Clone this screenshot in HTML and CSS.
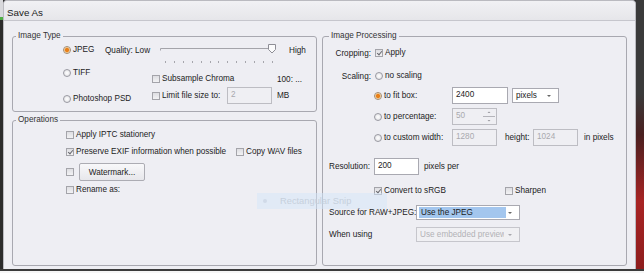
FILE: index.html
```html
<!DOCTYPE html>
<html lang="en">
<head>
    <meta charset="UTF-8">
    <title>Save As</title>
    <link rel="stylesheet" href="styles.css">
</head>
<body>

<div class="screen">
    <div class="edge-left"></div>

    <div class="dialog">
        <div class="titlebar">Save As</div>

        <div class="panes">
            <div class="col">
                <fieldset class="group">
                    <legend>Image Type</legend>
                    <div class="type-body">
                        <div class="formats">
                            <div class="opt"><span class="radio on"></span>JPEG</div>
                            <div class="opt tiff"><span class="radio"></span>TIFF</div>
                            <div class="opt psd"><span class="radio"></span>Photoshop PSD</div>
                        </div>
                        <div class="quality">
                            <div class="q-row">
                                <span class="q-label">Quality: Low</span>
                                <svg class="slider" width="120" height="12" viewBox="0 0 120 12">
                                    <path d="M0.5 6.5 V4.5 H109" fill="none" stroke="#a4a4aa" stroke-width="1"/>
                                    <path d="M108.5 0.5 H115.5 V5.5 L112 9 L108.5 5.5 Z" fill="#fbfbfc" stroke="#8e8e96" stroke-width="1"/>
                                </svg>
                                <span class="high">High</span>
                            </div>
                            <div class="ticks">
                                <i></i><i></i><i></i><i></i><i></i><i></i><i></i><i></i><i></i><i></i><i></i><i></i><i></i>
                            </div>
                            <div class="q-sub">
                                <div class="opt w125"><span class="check"></span>Subsample Chroma</div>
                                <span>100: ...</span>
                            </div>
                            <div class="q-limit">
                                <div class="opt w75"><span class="check"></span>Limit file size to:</div>
                                <div class="field off w45">2</div>
                                <span class="unit">MB</span>
                            </div>
                        </div>
                    </div>
                </fieldset>

                <fieldset class="group grow">
                    <legend>Operations</legend>
                    <div class="ops">
                        <div class="opt"><span class="check"></span>Apply IPTC stationery</div>
                        <div class="ops-row r2">
                            <div class="opt w170"><span class="check on"></span>Preserve EXIF information when possible</div>
                            <div class="opt"><span class="check"></span>Copy WAV files</div>
                        </div>
                        <div class="ops-row r3">
                            <span class="check gap"></span>
                            <button class="btn">Watermark...</button>
                        </div>
                        <div class="opt r4"><span class="check"></span>Rename as:</div>
                    </div>
                </fieldset>
            </div>

            <fieldset class="group processing">
                <legend>Image Processing</legend>
                <div class="ip">
                    <div class="ip-row">
                        <span class="lbl">Cropping:</span>
                        <div class="opt"><span class="check on"></span>Apply</div>
                    </div>
                    <div class="ip-row scaling">
                        <span class="lbl">Scaling:</span>
                        <div class="opt"><span class="radio"></span>no scaling</div>
                    </div>
                    <div class="ip-row sub fit">
                        <div class="opt w78"><span class="radio on"></span>to fit box:</div>
                        <div class="field w56">2400</div>
                        <div class="select w47">
                            <span class="sel-text">pixels</span>
                            <svg width="4" height="2" viewBox="0 0 4 2"><path d="M0 0 H4 L2 2 Z" fill="#666"/></svg>
                        </div>
                    </div>
                    <div class="ip-row sub">
                        <div class="opt w78"><span class="radio"></span>to percentage:</div>
                        <div class="field off w45 spin">
                            <span>50</span>
                            <svg width="14" height="15" viewBox="0 0 14 15">
                                <path d="M5.5 4 H8.5 L7 2.5 Z" fill="#9a9aa0"/>
                                <path d="M1 7.5 H13" stroke="#b4b4ba" stroke-width="1"/>
                                <path d="M5.5 11 H8.5 L7 12.5 Z" fill="#9a9aa0"/>
                            </svg>
                        </div>
                    </div>
                    <div class="ip-row sub">
                        <div class="opt w78"><span class="radio"></span>to custom width:</div>
                        <div class="field off w45">1280</div>
                        <span class="h-lbl">height:</span>
                        <div class="field off w45">1024</div>
                        <span class="px">in pixels</span>
                    </div>
                    <div class="ip-row res">
                        <span class="lbl-left w45">Resolution:</span>
                        <div class="field w45">200</div>
                        <span class="unit">pixels per</span>
                    </div>
                    <div class="ip-row sub srgb">
                        <div class="opt w131"><span class="check on"></span>Convert to sRGB</div>
                        <div class="opt"><span class="check"></span>Sharpen</div>
                    </div>
                    <div class="ip-row source">
                        <span class="lbl-left w87">Source for RAW+JPEG:</span>
                        <div class="select w104">
                            <span class="sel-hl">Use the JPEG</span>
                            <svg width="4" height="2" viewBox="0 0 4 2"><path d="M0 0 H4 L2 2 Z" fill="#666"/></svg>
                        </div>
                    </div>
                    <div class="ip-row using">
                        <span class="lbl-left w87">When using</span>
                        <div class="select off w104">
                            <span class="sel-clip">Use embedded preview</span>
                            <svg width="4" height="2" viewBox="0 0 4 2"><path d="M0 0 H4 L2 2 Z" fill="#a8a8ae"/></svg>
                        </div>
                    </div>
                </div>
            </fieldset>
        </div>

        <div class="snip"><i></i>Rectangular Snip</div>
    </div>

    <div class="edge-right"></div>
</div>

</body>
</html>
```

FILE: styles.css
```css
body {
    margin: 0;
    background: #f6f6f6;
    font-family: "Liberation Sans", Arial, sans-serif;
    font-size: 8.2px;
    color: #1c1c1c;
}
.screen {
    display: flex;
    height: 269px;
    border-bottom: 2px solid #3b3b3b;
    background: #2d2d2d;
}
.edge-left {
    width: 3px;
    background: linear-gradient(#d8d8dc 0 17px, #4fae45 17px 20px, #2b2b2b 20px);
}
.edge-right {
    flex: 1;
    background: linear-gradient(#3a3a3a 0 35%, #4a2020 50%, #a82424 75%, #8e1d1d);
}
.dialog {
    position: relative;
    width: 631px;
    border: 1px solid #babac0;
    border-bottom: 0;
    border-radius: 4px 4px 0 0;
    background: #eeeef3;
    display: flex;
    flex-direction: column;
}
.titlebar {
    height: 16px;
    padding: 3px 0 0 3px;
    border-bottom: 1px solid #c6c6cd;
    border-radius: 4px 4px 0 0;
    background: linear-gradient(#f1f1f4, #e6e6ea);
    font-size: 9.8px;
    line-height: 17px;
    color: #1a1a1a;
}
.panes {
    flex: 1;
    display: grid;
    grid-template-columns: 305px 305px;
    gap: 5px;
    padding: 10px 8px 3px 8px;
}
.col {
    display: flex;
    flex-direction: column;
    gap: 3px;
}
.group {
    margin: 0;
    padding: 0;
    min-width: 0;
    border: 1px solid #a8a8b0;
    border-radius: 3px;
}
.group legend {
    margin-left: 3px;
    padding: 0 2px;
    line-height: 10px;
    color: #333;
}
.grow {
    flex: 1;
}
.processing legend {
    margin-left: 6px;
}

/* controls */
.opt {
    display: flex;
    align-items: center;
    height: 10px;
    line-height: 10px;
    white-space: nowrap;
}
.radio {
    box-sizing: border-box;
    width: 8px;
    height: 8px;
    margin-right: 2px;
    border: 1px solid #9a9aa2;
    border-radius: 50%;
    background: radial-gradient(circle, #ffffff, #dcdce0);
    flex-shrink: 0;
}
.radio.on {
    border-color: #a08a70;
    background: radial-gradient(circle, #e8801a 0 1.6px, #f6c07a 2.4px, #fff 3.2px);
}
.check {
    position: relative;
    box-sizing: border-box;
    width: 8px;
    height: 8px;
    margin-right: 2px;
    border: 1px solid #a4a4aa;
    background: linear-gradient(#dedee2, #f2f2f4);
    flex-shrink: 0;
}
.check.on::after {
    content: "";
    position: absolute;
    left: 2px;
    top: 0;
    width: 2px;
    height: 4px;
    border: solid #6a6a70;
    border-width: 0 1px 1px 0;
    transform: rotate(40deg);
}
.check.gap {
    margin-right: 5px;
}
.field {
    box-sizing: border-box;
    height: 17px;
    padding: 2px 3px;
    border: 1px solid #a9a9b1;
    background: #fff;
    line-height: 10px;
    flex-shrink: 0;
}
.field.off {
    border-color: #bdbdc3;
    background: #efeff3;
    color: #a9a9ae;
}
.field.spin {
    display: flex;
    justify-content: space-between;
    padding-right: 0;
}
.field.spin svg {
    margin-top: -2px;
}
.select {
    box-sizing: border-box;
    display: flex;
    align-items: center;
    height: 15px;
    padding-left: 3px;
    border: 1px solid #a9a9b1;
    background: #fff;
    flex-shrink: 0;
}
.select svg {
    margin: 0 7px 0 auto;
}
.select.off {
    border-color: #c6c6cc;
    background: #f0f0f3;
    color: #b2b2b6;
}
.sel-hl {
    width: 85px;
    height: 11px;
    margin-left: -1px;
    padding-left: 2px;
    background: #a3c6ee;
    line-height: 11px;
}
.sel-clip {
    width: 84px;
    overflow: hidden;
    white-space: nowrap;
}
.btn {
    width: 66px;
    height: 18px;
    padding: 0;
    border: 1px solid #acacb3;
    border-radius: 2px;
    background: linear-gradient(#f8f8fa, #e7e7eb);
    font: inherit;
    color: #1c1c1c;
}

/* widths */
.w45 { width: 45px; }
.w47 { width: 47px; }
.w56 { width: 56px; }
.w75 { width: 75px; }
.w78 { width: 78px; }
.w87 { width: 87px; flex-shrink: 0; }
.w104 { width: 104px; }
.w125 { width: 125px; }
.w131 { width: 131px; }
.w170 { width: 170px; }

/* image type */
.type-body {
    display: flex;
    padding: 4px 0 7px 50px;
}
.formats {
    width: 42px;
}
.formats .tiff {
    margin-top: 13px;
}
.formats .psd {
    margin-top: 16px;
}
.quality {
    display: flex;
    flex-direction: column;
}
.q-row {
    display: flex;
    align-items: center;
    height: 10px;
    white-space: nowrap;
}
.q-label {
    width: 55px;
}
.high {
    margin-left: 9px;
}
.ticks {
    display: flex;
    justify-content: space-between;
    width: 108px;
    height: 2px;
    margin: 6px 0 0 60px;
}
.ticks i {
    width: 1px;
    height: 2px;
    background: #a6a6ac;
}
.q-sub {
    display: flex;
    align-items: center;
    height: 10px;
    margin-top: 11px;
    padding-left: 47px;
}
.q-limit {
    display: flex;
    align-items: center;
    margin-top: 3px;
    padding-left: 47px;
}
.unit {
    margin-left: 5px;
}

/* operations */
.ops {
    padding: 5px 0 0 53px;
}
.ops-row {
    display: flex;
    align-items: center;
}
.ops .r2 {
    margin-top: 7px;
}
.ops .r3 {
    margin-top: 6px;
}
.ops .r4 {
    margin-top: 4px;
}

/* image processing */
.ip {
    padding: 7px 0 0 6px;
}
.ip-row {
    display: flex;
    align-items: center;
    white-space: nowrap;
}
.lbl {
    width: 42px;
    margin-right: 4px;
    text-align: right;
}
.lbl-left {
    flex-shrink: 0;
}
.scaling {
    margin-top: 13px;
}
.sub {
    padding-left: 45px;
    margin-top: 4px;
}
.fit {
    margin-top: 6px;
}
.fit .select {
    margin-left: 4px;
}
.h-lbl {
    width: 28px;
    margin-left: 8px;
}
.px {
    margin-left: 6px;
}
.res {
    margin-top: 12px;
}
.srgb {
    margin-top: 11px;
}
.source {
    margin-top: 9px;
}
.using {
    margin-top: 7px;
}

/* screen snip hint lying over the dialog */
.snip {
    position: absolute;
    left: 253px;
    top: 192px;
    width: 124px;
    height: 16px;
    padding-left: 6px;
    display: flex;
    align-items: center;
    background: rgba(212, 230, 250, 0.5);
    font-size: 9.3px;
    color: #c6d0dc;
}
.snip i {
    width: 4px;
    height: 4px;
    margin-right: 13px;
    border-radius: 50%;
    background: #d0dae8;
}
```
